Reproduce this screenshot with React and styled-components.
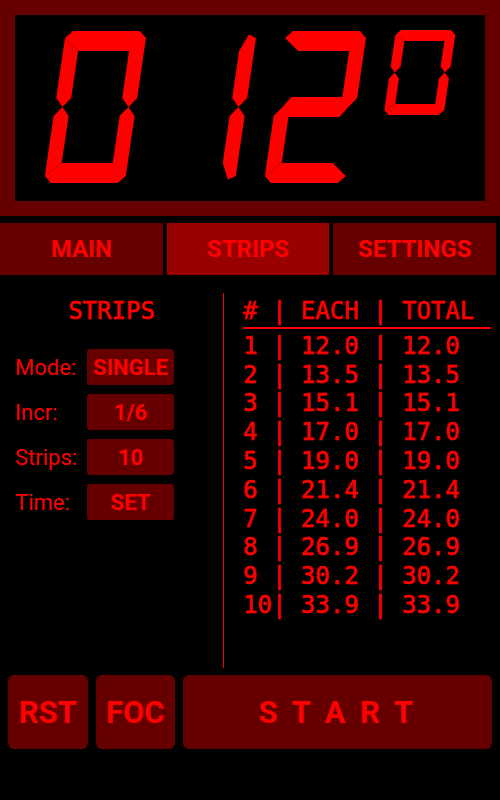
import React from "react";
import styled, { createGlobalStyle } from "styled-components";

const GlobalStyle = createGlobalStyle`
  html, body {
    margin: 0;
    padding: 0;
    background: #000;
  }
`;

const Screen = styled.div`
  width: 500px;
  height: 800px;
  background: #000;
  overflow: hidden;
  font-family: Roboto, "Liberation Sans", sans-serif;
  color: #ff0000;
`;

const Display = styled.div`
  height: 186px;
  border: 15px solid #660000;
  background: #000;

  svg {
    display: block;
  }
`;

const TabBar = styled.div`
  display: flex;
  gap: 4px;
  height: 52px;
  margin: 7px 4px 0 0;
`;

const Tab = styled.button`
  flex: 1;
  display: flex;
  align-items: center;
  justify-content: center;
  padding: 0;
  border: none;
  background: ${(p) => (p.$active ? "#990000" : "#660000")};
  color: #ff0000;
  font-family: Roboto, "Liberation Sans", sans-serif;
  font-weight: 700;
  font-size: 24px;
`;

const Body = styled.div`
  display: flex;
  height: 375px;
  margin-top: 18px;
`;

const LeftPanel = styled.div`
  width: 224px;
  box-sizing: border-box;
  border-right: 1px solid #ff0000;
  padding-top: 4px;
`;

const Mono = styled.div`
  font-family: "DejaVu Sans Mono", "Liberation Mono", monospace;
  font-size: 24px;
  line-height: 28.8px;
  white-space: pre;
  -webkit-text-stroke: 0.6px #ff0000;
`;

const Heading = styled(Mono)`
  text-align: center;
`;

const Controls = styled.div`
  display: flex;
  flex-direction: column;
  gap: 9px;
  margin-top: 23.5px;
`;

const ControlRow = styled.div`
  display: flex;
  align-items: center;
  padding-left: 15px;
`;

const Label = styled.span`
  width: 72px;
  font-size: 22px;
`;

const ValueButton = styled.button`
  width: 87px;
  height: 36px;
  padding: 0;
  border: none;
  border-radius: 3px;
  background: #660000;
  color: #ff0000;
  font-family: Roboto, "Liberation Sans", sans-serif;
  font-weight: 700;
  font-size: 22px;
`;

const RightPanel = styled.div`
  flex: 1;
  padding: 4px 9px 0 19px;
`;

const TableHead = styled(Mono)`
  border-bottom: 2px solid #ff0000;
  padding-bottom: 1px;
`;

const TableBody = styled.div`
  margin-top: 3px;
`;

const Footer = styled.div`
  display: flex;
  gap: 8px;
  height: 74px;
  margin-top: 7px;
  padding: 0 8px;
`;

const ActionButton = styled.button`
  flex: ${(p) => (p.$wide ? "1" : "0 0 79.5px")};
  padding: 0;
  border: none;
  border-radius: 6px;
  background: #660000;
  color: #ff0000;
  font-family: Roboto, "Liberation Sans", sans-serif;
  font-weight: 700;
  font-size: 31px;
  letter-spacing: ${(p) => (p.$wide ? "3.5px" : "0")};
`;

// seven segment geometry, local coords before the italic skew
const segmentPoints = ({ w, h, t, v, c, k }) => {
  const m = h / 2;
  return {
    a: [[0, c], [c, 0], [w - c, 0], [w, c], [w - v, t], [v, t]],
    b: [[w - v, t], [w - v / 2, c / 2], [w, c], [w, m - k], [w - v / 2, m], [w - v, m - k]],
    c: [[w - v / 2, m], [w, m + k], [w, h - c], [w - v / 2, h - c / 2], [w - v, h - t], [w - v, m + k]],
    d: [[0, h - c], [v, h - t], [w - v, h - t], [w, h - c], [w - c, h], [c, h]],
    e: [[v / 2, m], [v, m + k], [v, h - t], [0, h - c], [0, m + k]],
    f: [[0, c], [v, t], [v, m - k], [v / 2, m], [0, m - k]],
    g: [[v / 2, m], [v, m - t / 2], [w - v, m - t / 2], [w - v / 2, m], [w - v, m + t / 2], [v, m + t / 2]],
  };
};

const DIGITS = {
  0: "abcdef",
  1: "bc",
  2: "abged",
  3: "abgcd",
  4: "fgbc",
  5: "afgcd",
  6: "afgedc",
  7: "abc",
  8: "abcdefg",
  9: "abcdfg",
};

const BIG = { w: 81, h: 152, t: 20, v: 15, c: 7, k: 9 };
const SMALL = { w: 60, h: 85, t: 11, v: 10, c: 5, k: 6 };

function SegmentDigit({ value, x, y, size }) {
  const segs = segmentPoints(size);
  return (
    <g transform={`translate(${x} ${y}) skewX(-8.3)`} fill="#ff0000">
      {DIGITS[value].split("").map((s) => (
        <polygon key={s} points={segs[s].map((p) => p.join(",")).join(" ")} />
      ))}
    </g>
  );
}

const rows = [
  ["1 ", "12.0", "12.0"],
  ["2 ", "13.5", "13.5"],
  ["3 ", "15.1", "15.1"],
  ["4 ", "17.0", "17.0"],
  ["5 ", "19.0", "19.0"],
  ["6 ", "21.4", "21.4"],
  ["7 ", "24.0", "24.0"],
  ["8 ", "26.9", "26.9"],
  ["9 ", "30.2", "30.2"],
  ["10", "33.9", "33.9"],
];

const controls = [
  ["Mode:", "SINGLE"],
  ["Incr:", "1/6"],
  ["Strips:", "10"],
  ["Time:", "SET"],
];

export default function App() {
  return (
    <Screen>
      <GlobalStyle />
      <Display>
        <svg width="470" height="186" viewBox="0 0 470 186" role="img" aria-label="012 0">
          <SegmentDigit value="0" x={51} y={16} size={BIG} />
          <SegmentDigit value="1" x={161} y={16} size={BIG} />
          <SegmentDigit value="2" x={271} y={16} size={BIG} />
          <SegmentDigit value="0" x={381} y={15} size={SMALL} />
        </svg>
      </Display>

      <TabBar>
        <Tab>MAIN</Tab>
        <Tab $active>STRIPS</Tab>
        <Tab>SETTINGS</Tab>
      </TabBar>

      <Body>
        <LeftPanel>
          <Heading>STRIPS</Heading>
          <Controls>
            {controls.map(([label, value]) => (
              <ControlRow key={label}>
                <Label>{label}</Label>
                <ValueButton>{value}</ValueButton>
              </ControlRow>
            ))}
          </Controls>
        </LeftPanel>
        <RightPanel>
          <TableHead>{"# | EACH | TOTAL"}</TableHead>
          <TableBody>
            {rows.map(([n, each, total]) => (
              <Mono key={n}>{`${n}| ${each} | ${total}`}</Mono>
            ))}
          </TableBody>
        </RightPanel>
      </Body>

      <Footer>
        <ActionButton>RST</ActionButton>
        <ActionButton>FOC</ActionButton>
        <ActionButton $wide>S T A R T</ActionButton>
      </Footer>
    </Screen>
  );
}
